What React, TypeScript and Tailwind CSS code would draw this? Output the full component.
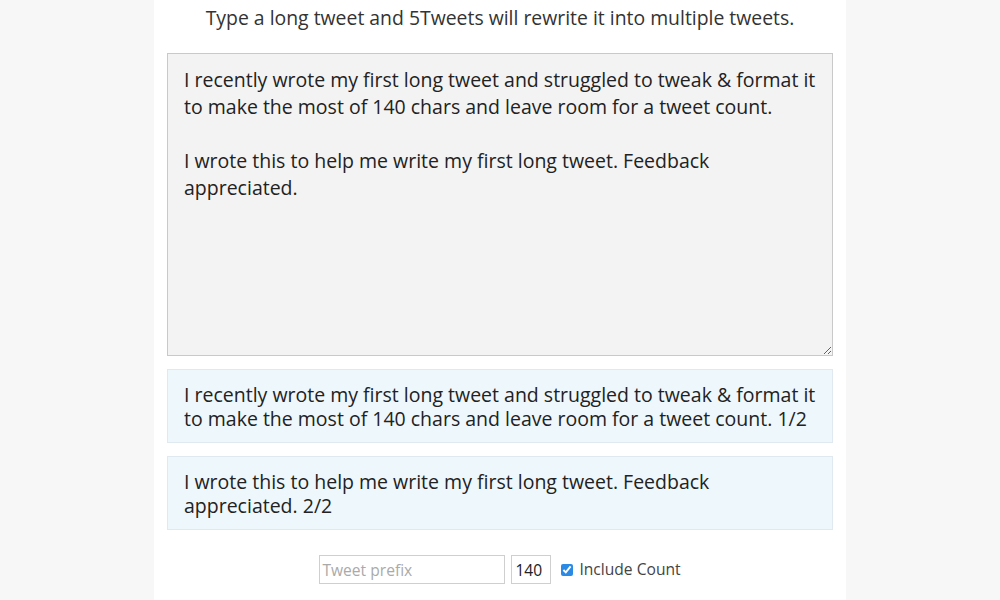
import { useState } from 'react';

const FONT = { fontFamily: '"Open Sans", "Noto Sans", sans-serif' };

const LONG_TWEET =
  'I recently wrote my first long tweet and struggled to tweak & format it to make the most of 140 chars and leave room for a tweet count.\n\nI wrote this to help me write my first long tweet. Feedback appreciated.';

const TWEETS = [
  'I recently wrote my first long tweet and struggled to tweak & format it to make the most of 140 chars and leave room for a tweet count. 1/2',
  'I wrote this to help me write my first long tweet. Feedback appreciated. 2/2',
];

export default function App() {
  const [text, setText] = useState(LONG_TWEET);

  return (
    <div className="min-h-[600px] w-full bg-[#f7f7f7] text-[#333]" style={FONT}>
      <div className="mx-auto w-[692px] min-h-[600px] bg-white px-[13px]">
        {/* Intro */}
        <p className="pt-[6px] text-center text-[19.4px] leading-[24px] text-[#333]">
          Type a long tweet and 5Tweets will rewrite it into multiple tweets.
        </p>

        {/* Long tweet input */}
        <textarea
          value={text}
          onChange={(e) => setText(e.target.value)}
          className="mt-[23px] block h-[303px] w-full resize-y border border-[#c9c9c9] bg-[#f3f3f3] pl-[16px] pr-[14px] py-[12px] text-[19.5px] leading-[27px] text-[#222] outline-none"
          style={FONT}
        />

        {/* Split tweets */}
        <div className="mt-[13px] flex flex-col gap-[13px]">
          {TWEETS.map((t, i) => (
            <div
              key={i}
              className="h-[74px] border border-[#dfe9ef] bg-[#eef7fc] pl-[16px] pr-[14px] pt-[13px] text-[19.5px] leading-[24px] text-[#222]"
            >
              {t}
            </div>
          ))}
        </div>

        {/* Options */}
        <div className="mt-[25px] flex items-center justify-center gap-[6px] text-[15.6px]">
          <input
            placeholder="Tweet prefix"
            className="h-[29px] w-[186px] border border-[#cfcfcf] px-[2px] text-[15.6px] text-[#333] placeholder:text-[#aaa] outline-none"
            style={FONT}
          />
          <input
            defaultValue="140"
            className="h-[29px] w-[40px] border border-[#cfcfcf] px-[3px] text-[15.6px] text-[#222] outline-none"
            style={FONT}
          />
          <label className="ml-[4px] flex items-center gap-[6px] text-[#444]">
            <input type="checkbox" defaultChecked className="mt-[2px] h-[12px] w-[12px] accent-[#2a8ae6]" />
            Include Count
          </label>
        </div>
      </div>
    </div>
  );
}
